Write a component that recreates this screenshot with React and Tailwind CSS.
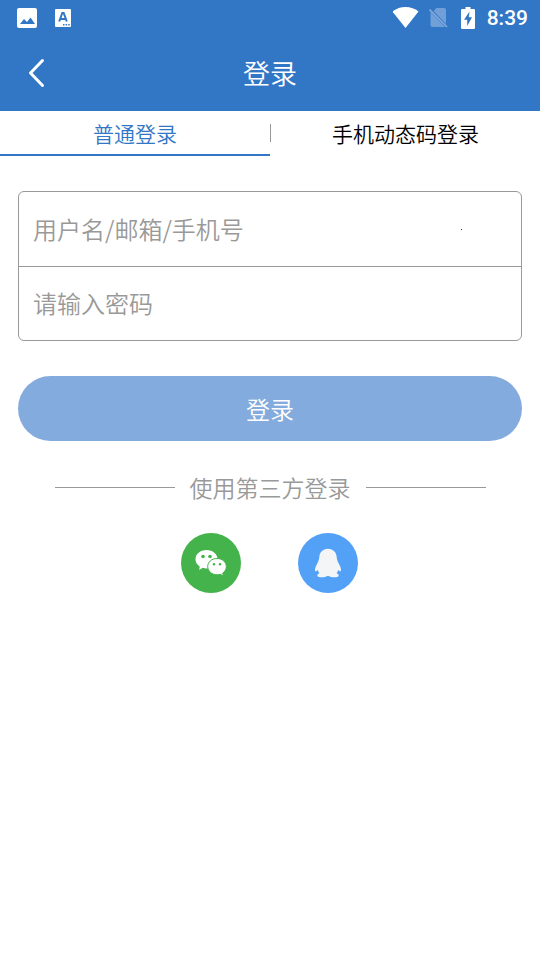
import React, { useState } from 'react';

const tabs = [
  { id: 'password', label: '普通登录' },
  { id: 'sms', label: '手机动态码登录' },
];

function StatusBar() {
  return (
    <div className="flex h-9 items-center justify-between pl-4 pr-3">
      <div className="flex items-center gap-4">
        <svg width="22" height="22" viewBox="0 0 22 22" aria-hidden="true">
          <rect x="1" y="1" width="20" height="20" rx="2" fill="#fff" />
          <path d="M4 17l4-5 3 3 3.500-4.500L19 17z" fill="#3276c6" />
        </svg>
        <svg width="18" height="20" viewBox="0 0 18 20" aria-hidden="true">
          <rect x="1" y="1" width="16" height="18" rx="1" fill="#fff" />
          <path
            d="M5.200 13.500L8.300 5h1.400l3.100 8.500M6.500 11h5"
            fill="none"
            stroke="#3276c6"
            strokeWidth="2"
          />
          <path d="M9 16h1.500v1.500H9zM11.600 16h1.500v1.500h-1.500zM14.200 16h1.500v1.500h-1.500z" fill="#3276c6" />
        </svg>
      </div>
      <div className="flex items-center">
        <svg className="mr-2" width="28" height="22" viewBox="0 0 28 22" aria-hidden="true">
          <path d="M12.500 21L-.5 4.500C3 1.700 7.500 0 12.500 0s9.500 1.700 13 4.500z" fill="#fff" />
        </svg>
        <svg className="mr-3" width="20" height="22" viewBox="0 0 20 22" aria-hidden="true">
          <path d="M7.500 1H15q2 0 2 2v14L4.500 4zM1.500 5L16 20H3.500q-2 0-2-2z" fill="#719fd8" />
          <path d="M.5 2.500l17.500 17.500" stroke="#84abdd" strokeWidth="1.600" />
        </svg>
        <svg className="mr-3" width="14" height="22" viewBox="0 0 14 22" aria-hidden="true">
          <path d="M4.500 0h5v2H13q1 0 1 1v18q0 1-1 1H1q-1 0-1-1V3q0-1 1-1h3.500z" fill="#fff" />
          <path d="M8.500 4.500L3 12.800h3.200v6.200L11 10.300H7.800z" fill="#3276c6" />
        </svg>
        <span className="font-['Roboto',sans-serif] text-[21px] leading-6 font-medium">8:39</span>
      </div>
    </div>
  );
}

function WechatIcon() {
  return (
    <svg width="32" height="28" viewBox="0 0 32 28" aria-hidden="true">
      <path
        d="M11.500 1C5.300 1 .5 5 .5 10.200c0 3 1.700 5.600 4.200 7.300L4.200 21l3.600-2.200c1.200.4 2.400.6 3.700.6 6.200 0 11-4 11-9.200S17.700 1 11.500 1z"
        fill="#fff"
      />
      <path
        d="M22 9.500c-5.200 0-9.300 3.500-9.300 8s4.100 8.300 9.300 8.300c1.200 0 2.300-.2 3.300-.5l3.100 1.700-.7-2.900c2.200-1.500 3.600-3.700 3.600-6.600 0-4.500-4.100-8-9.300-8z"
        fill="#fff"
        stroke="#44b34b"
        strokeWidth="1"
      />
      <g fill="#44b34b">
        <circle cx="8" cy="7.500" r="1.800" />
        <circle cx="15" cy="7.500" r="1.800" />
        <circle cx="19" cy="15.200" r="1.200" />
        <circle cx="25" cy="15.200" r="1.200" />
      </g>
    </svg>
  );
}

function QqIcon() {
  return (
    <svg width="28" height="30" viewBox="0 0 28 30" aria-hidden="true">
      <path
        d="M14 .8C8.800.8 5.600 4.400 5.300 9c-.2 2.400-.8 4-1.900 6.200C2 17.800 1.100 19.600 1 21.700c0 1.800.8 2 1.900 1.100l1-.8c.2 1.200.7 2.200 1.500 3.300-1.400.5-2.100 1.200-2.100 2.100 0 1.400 2 1.800 4.800 1.800 2.600 0 4.700-.6 5.900-1.500 1.200.9 3.300 1.500 5.900 1.500 2.800 0 4.800-.4 4.800-1.800 0-.9-.7-1.600-2.100-2.100.8-1.100 1.300-2.100 1.500-3.300l1 .8c1.100.9 1.900.7 1.900-1.100-.1-2.100-1-3.900-2.400-6.500-1.100-2.200-1.700-3.800-1.900-6.200C22.400 4.400 19.200.8 14 .8z"
        fill="#f3f5f7"
      />
    </svg>
  );
}

export default function App() {
  const [activeTab, setActiveTab] = useState('password');

  return (
    <div className="min-h-screen bg-white font-['Noto_Sans_CJK_SC',sans-serif] font-[350]">
      <header className="bg-[#3276c6] text-white">
        <StatusBar />
        <div className="grid h-[75px] grid-cols-[1fr_auto_1fr] items-center pb-0.5">
          <button type="button" aria-label="返回" className="ml-6 w-6">
            <svg width="24" height="30" viewBox="0 0 24 30" aria-hidden="true">
              <path
                d="M18.500 2.500L6.500 15l12 12.500"
                fill="none"
                stroke="#fff"
                strokeWidth="3"
                strokeLinecap="round"
                strokeLinejoin="round"
              />
            </svg>
          </button>
          <h1 className="text-[27px] leading-9">登录</h1>
        </div>
      </header>

      <nav className="flex h-[45px]">
        {tabs.map((tab, index) => (
          <button
            key={tab.id}
            type="button"
            onClick={() => setActiveTab(tab.id)}
            className={`flex flex-1 items-center border-b-2 text-[21px] leading-7 ${
              activeTab === tab.id ? 'border-[#3276c6] text-[#3276c6]' : 'border-transparent text-black'
            }`}
          >
            {index > 0 && <span className="h-[18px] w-px bg-[#999]"></span>}
            <span className="flex-1">{tab.label}</span>
          </button>
        ))}
      </nav>

      <form className="px-[18px] pt-[35px]" onSubmit={(e) => e.preventDefault()}>
        <div className="divide-y divide-[#999] rounded-md border border-[#999]">
          <div className="flex h-[75px] items-center">
            <input
              type="text"
              aria-label="用户名/邮箱/手机号"
              placeholder="用户名/邮箱/手机号"
              className="h-full min-w-0 flex-1 pb-0.5 pl-[14px] text-2xl outline-none placeholder:text-[#999]"
            />
            <span className="mr-[59px] size-px bg-[#333]"></span>
          </div>
          <div className="flex h-[73px] items-center">
            <input
              type="password"
              aria-label="请输入密码"
              placeholder="请输入密码"
              className="h-full min-w-0 flex-1 pb-0.5 pl-[14px] text-2xl outline-none placeholder:text-[#999]"
            />
          </div>
        </div>

        <button
          type="submit"
          className="mt-[35px] h-[65px] w-full rounded-full bg-[#84abdd] text-2xl text-white"
        >
          登录
        </button>
      </form>

      <div className="mt-7 flex items-center justify-center gap-[15px] text-[23px] leading-9 text-[#999]">
        <span className="h-px w-[120px] bg-[#999]"></span>
        <span>使用第三方登录</span>
        <span className="h-px w-[120px] bg-[#999]"></span>
      </div>

      <div className="mt-7 flex justify-center gap-[57px] pr-px">
        <button
          type="button"
          aria-label="微信登录"
          className="flex size-[60px] items-center justify-center rounded-full bg-[#44b34b]"
        >
          <WechatIcon />
        </button>
        <button
          type="button"
          aria-label="QQ登录"
          className="flex size-[60px] items-center justify-center rounded-full bg-[#52a1f6]"
        >
          <QqIcon />
        </button>
      </div>
    </div>
  );
}
